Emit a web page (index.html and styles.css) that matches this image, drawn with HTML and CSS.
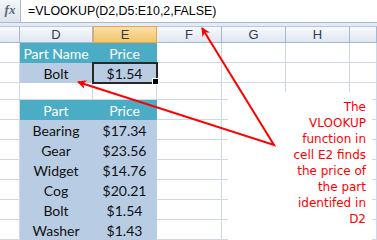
FILE: index.html
```html
<!DOCTYPE html>
<html lang="en">
<head>
<meta charset="utf-8">
<title>VLOOKUP example</title>
<link rel="stylesheet" href="styles.css">
</head>
<body>
<div class="app">
  <div class="formula-bar">
    <div class="fx">fx</div>
    <div class="formula">=VLOOKUP(D2,D5:E10,2,FALSE)</div>
  </div>
  <div class="band"></div>
  <div class="sheet">
    <div class="ch"></div><div class="ch">D</div><div class="ch sel">E</div><div class="ch">F</div><div class="ch">G</div><div class="ch">H</div><div class="ch"></div>

    <div class="c"></div><div class="c th">Part Name</div><div class="c th">Price</div><div class="c"></div><div class="c"></div><div class="c"></div><div class="c"></div>
    <div class="c"></div><div class="c td">Bolt</div><div class="c td active">$1.54</div><div class="c"></div><div class="c"></div><div class="c"></div><div class="c"></div>
    <div class="c"></div><div class="c"></div><div class="c"></div><div class="c"></div><div class="c"></div><div class="c"></div><div class="c"></div>

    <div class="c"></div><div class="c th">Part</div><div class="c th">Price</div><div class="c"></div><div class="c"></div><div class="c"></div><div class="c"></div>
    <div class="c"></div><div class="c td">Bearing</div><div class="c td">$17.34</div><div class="c"></div><div class="c"></div><div class="c"></div><div class="c"></div>
    <div class="c"></div><div class="c td">Gear</div><div class="c td">$23.56</div><div class="c"></div><div class="c"></div><div class="c"></div><div class="c"></div>
    <div class="c"></div><div class="c td">Widget</div><div class="c td">$14.76</div><div class="c"></div><div class="c"></div><div class="c"></div><div class="c"></div>
    <div class="c"></div><div class="c td">Cog</div><div class="c td">$20.21</div><div class="c"></div><div class="c"></div><div class="c"></div><div class="c"></div>
    <div class="c"></div><div class="c td">Bolt</div><div class="c td">$1.54</div><div class="c"></div><div class="c"></div><div class="c"></div><div class="c"></div>
    <div class="c"></div><div class="c td">Washer</div><div class="c td">$1.43</div><div class="c"></div><div class="c"></div><div class="c"></div><div class="c"></div>
  </div>

  <div class="note">The<br>VLOOKUP<br>function in<br>cell E2 finds<br>the price of<br>the part<br>identifed in<br>D2</div>

  <svg class="arrows" width="377" height="240" viewBox="0 0 377 240">
    <defs>
      <marker id="head" viewBox="0 0 10 10" refX="9" refY="5" markerUnits="userSpaceOnUse" markerWidth="10" markerHeight="9" orient="auto-start-reverse">
        <path d="M0,0 L10,5 L0,10 L3,5 z" fill="#ff0000"/>
      </marker>
    </defs>
    <polyline points="202,28 274,145 78,82" fill="none" stroke="#ff0000" stroke-width="2" stroke-linejoin="miter" marker-start="url(#head)" marker-end="url(#head)"/>
  </svg>
</div>
</body>
</html>
```

FILE: styles.css
```css
* {
  box-sizing: border-box;
}

html, body {
  margin: 0;
  padding: 0;
  background: #ffffff;
}

.app {
  position: relative;
  width: 377px;
  height: 240px;
  overflow: hidden;
}

/* formula bar */
.formula-bar {
  display: flex;
  height: 23px;
  border-bottom: 1px solid #a9bbd0;
}

.fx {
  width: 21px;
  display: flex;
  align-items: center;
  justify-content: center;
  background: linear-gradient(#f3f6fa, #dde4ee);
  border-right: 1px solid #a9bbd0;
  font-family: "Liberation Serif", serif;
  font-style: italic;
  font-weight: bold;
  font-size: 13px;
  color: #59677a;
  padding-bottom: 2px;
}

.formula {
  flex: 1;
  padding-left: 7px;
  font-family: "Liberation Sans", Arial, sans-serif;
  font-size: 12.4px;
  line-height: 22px;
  color: #000000;
}

.band {
  height: 3px;
  background: #e4ebf4;
}

/* worksheet grid */
.sheet {
  display: grid;
  grid-template-columns: 20px 73px 64px 65px 64px 64px 27px;
  grid-template-rows: 17px 20px 20px 17px repeat(7, 20px);
  font-family: Lato, "Liberation Sans", sans-serif;
  font-size: 14px;
}

.ch {
  background: linear-gradient(#f7f9fc, #e0e7f1);
  border-right: 1px solid #a4b9d0;
  border-bottom: 1px solid #a4b9d0;
  border-top: 1px solid #b8c8da;
  display: flex;
  align-items: center;
  justify-content: center;
  font-family: "Liberation Sans", Arial, sans-serif;
  font-size: 13px;
  color: #2f3d52;
}

.ch.sel {
  background: linear-gradient(#fae0ac, #f2c567);
  border-color: #f0a443;
  border-left: 1px solid #f0a443;
}

.c {
  border-right: 1px solid #d0d7e5;
  border-bottom: 1px solid #d0d7e5;
  display: flex;
  align-items: flex-end;
  justify-content: center;
  line-height: 17px;
  color: #111111;
}

.c.th {
  background: #4bacc6;
  border-color: #4bacc6;
  color: #ffffff;
}

.c.td {
  background: #b8cce4;
  border-color: #b8cce4;
}

.c.active {
  position: relative;
  outline: 2px solid #2c2723;
  outline-offset: -1px;
  border-top: 1px solid #6b3b2c;
}

.c.active::after {
  content: "";
  position: absolute;
  right: -3px;
  bottom: -3px;
  width: 5px;
  height: 5px;
  background: #000000;
  border: 1px solid #ffffff;
}

/* floating note */
.note {
  position: absolute;
  left: 228px;
  top: 92px;
  width: 144px;
  height: 148px;
  background: #ffffff;
  padding: 7px 6px 0 0;
  text-align: right;
  font-family: "DejaVu Sans", Verdana, sans-serif;
  font-size: 12px;
  line-height: 16px;
  color: #ff0000;
}

.arrows {
  position: absolute;
  left: 0;
  top: 0;
  pointer-events: none;
}
```
